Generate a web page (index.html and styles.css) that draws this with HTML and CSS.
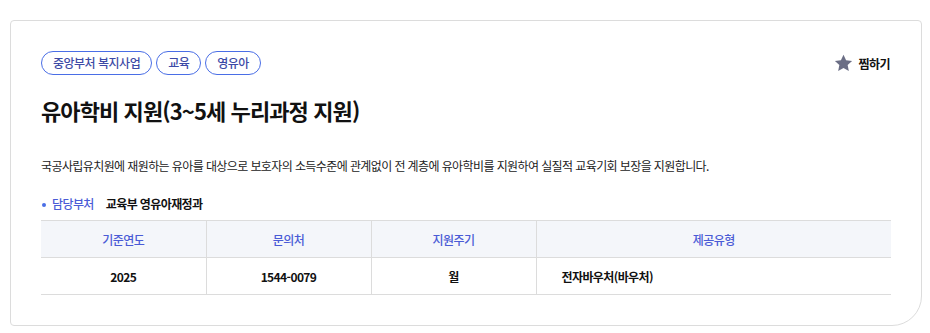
FILE: index.html
```html
<!DOCTYPE html>
<html lang="ko">
<head>
	<meta charset="UTF-8">
	<title>유아학비 지원</title>
	<link rel="stylesheet" href="styles.css">
</head>
<body>
	<div class="wrap">
		<div class="card">
			<div class="card-top">
				<ul class="tags">
					<li>중앙부처 복지사업</li>
					<li>교육</li>
					<li>영유아</li>
				</ul>
				<button class="btn-like" type="button">
					<svg width="19" height="18" viewBox="0 0 24 23"><path d="M12 0.8l3.3 7.1 7.7 0.9-5.7 5.3 1.5 7.7L12 17.9l-6.8 3.9 1.5-7.7L1 8.8l7.7-0.9z" fill="#6b6e85"/></svg>
					<span>찜하기</span>
				</button>
			</div>
			<h2 class="title">유아학비 지원(3~5세 누리과정 지원)</h2>
			<p class="desc">국공사립유치원에 재원하는 유아를 대상으로 보호자의 소득수준에 관계없이 전 계층에 유아학비를 지원하여 실질적 교육기회 보장을 지원합니다.</p>
			<dl class="dept">
				<dt>담당부처</dt>
				<dd>교육부 영유아재정과</dd>
			</dl>
			<table class="info">
				<colgroup>
					<col class="c1"><col class="c2"><col class="c3"><col>
				</colgroup>
				<thead>
					<tr><th>기준연도</th><th>문의처</th><th>지원주기</th><th>제공유형</th></tr>
				</thead>
				<tbody>
					<tr><td>2025</td><td>1544-0079</td><td>월</td><td class="left">전자바우처(바우처)</td></tr>
				</tbody>
			</table>
		</div>
	</div>
</body>
</html>
```

FILE: styles.css
```css
body{
	margin: 0;
	padding: 0;
	background: #fff;
	font-family: "Noto Sans CJK KR", "Noto Sans", sans-serif;
	color: #111;
}
.wrap{
	padding: 20px 8px 0 10px;
}
.card{
	border: 1px solid #dcdcdc;
	border-radius: 4px 4px 30px 4px;
	padding: 30px 30px 30px 30px;
}
.card-top{
	display: flex;
	justify-content: space-between;
	align-items: center;
}
.tags{
	list-style: none;
	margin: 0;
	padding: 0;
	display: flex;
	gap: 4px;
}
.tags li{
	height: 24px;
	box-sizing: border-box;
	line-height: 22px;
	padding: 0 11px;
	border: 1px solid #4a6ee6;
	border-radius: 12px;
	font-size: 12px;
	letter-spacing: -0.5px;
	font-weight: 500;
	color: #3d4aa6;
}
.btn-like{
	display: flex;
	align-items: center;
	gap: 5px;
	border: 0;
	background: none;
	padding: 0;
	font-family: inherit;
	font-size: 12px;
	font-weight: 700;
	letter-spacing: -0.5px;
	color: #111;
	margin-right: 1px;
}
.title{
	margin: 20px 0 0;
	font-size: 22px;
	line-height: 30px;
	font-weight: 700;
	letter-spacing: -0.9px;
}
.desc{
	margin: 31px 0 0;
	font-size: 12px;
	line-height: 20px;
	letter-spacing: -0.6px;
	color: #222;
}
.dept{
	margin: 18px 0 0;
	display: flex;
	font-size: 12px;
	line-height: 20px;
	letter-spacing: -0.6px;
}
.dept dt{
	position: relative;
	padding-left: 11px;
	color: #4a5bd6;
	font-weight: 500;
	margin-right: 12px;
}
.dept dt:before{
	content: "";
	position: absolute;
	left: 1px;
	top: 9px;
	width: 4px;
	height: 4px;
	border-radius: 50%;
	background: #4a6ee6;
}
.dept dd{
	margin: 0;
	font-weight: 700;
	color: #111;
}
.info{
	margin-top: 6px;
	width: 100%;
	border-collapse: collapse;
	font-size: 12px;
	letter-spacing: -0.6px;
}
.info .c1,.info .c2,.info .c3{width: 165px;}
.info th,.info td{
	height: 36px;
	padding: 0;
	text-align: center;
	border-top: 1px solid #dcdcdc;
	border-bottom: 1px solid #dcdcdc;
	border-left: 1px solid #dcdcdc;
}
.info th:first-child,.info td:first-child{border-left: 0;}
.info th{
	background: #f4f6fa;
	color: #4a5bd6;
	font-weight: 500;
}
.info td{
	font-weight: 700;
	color: #111;
}
.info td.left{
	text-align: left;
	padding-left: 25px;
}
```
